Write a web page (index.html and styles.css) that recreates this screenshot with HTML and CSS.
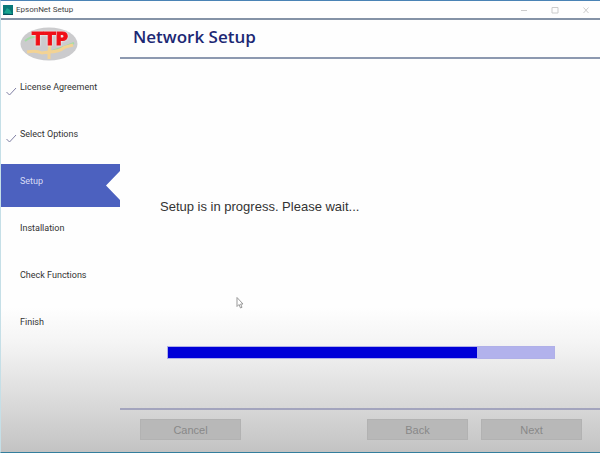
FILE: index.html
```
<!DOCTYPE html>
<html lang="en">
<head>
  <meta charset="UTF-8">
  <title>EpsonNet Setup</title>
  <link rel="stylesheet" href="styles.css">
</head>
<body>
  <div class="window">
    <header class="titlebar">
      <svg class="app-icon" width="10" height="10" viewBox="0 0 10 10">
        <rect width="10" height="10" fill="#087878"/>
        <path d="M1 8 4 3l3 2 2 4z" fill="#17a590"/>
        <path d="M0 9h10v1H0z" fill="#064f5d"/>
      </svg>
      <span class="app-name">EpsonNet Setup</span>
      <div class="window-controls">
        <button aria-label="Minimize"><svg width="8" height="8" viewBox="0 0 8 8"><path d="M1 4.500h6"/></svg></button>
        <button aria-label="Maximize"><svg width="8" height="8" viewBox="0 0 8 8"><path d="M1 1.500h6v5.500h-6z"/></svg></button>
        <button aria-label="Close"><svg width="8" height="8" viewBox="0 0 8 8"><path d="M1.500 1.500l5 5.500M6.500 1.500l-5 5.500"/></svg></button>
      </div>
    </header>

    <div class="content">
      <aside class="sidebar">
        <div class="logo">
          <svg width="58" height="34" viewBox="0 0 58 34" role="img" aria-label="TTP">
            <ellipse cx="29" cy="17" rx="28.500" ry="16.500" fill="#cbcbcd"/>
            <path d="M5 14q6-5 14-4M32 24l12-4 10-4" fill="none" stroke="#a4dba5" stroke-width="2"/>
            <path d="M7 25q9-2 15 1l7-1 1-7M29 25v7M29 25q10 0 16-5l8-2" fill="none" stroke="#f3d394" stroke-width="3"/>
            <text class="logo-text" x="12" y="18">TTP</text>
          </svg>
        </div>
        <ol class="steps">
          <li class="step done"><svg class="check" width="11" height="9" viewBox="0 0 11 9"><path d="M.5 5l3 3L10 1"/></svg>License Agreement</li>
          <li class="step done"><svg class="check" width="11" height="9" viewBox="0 0 11 9"><path d="M.5 5l3 3L10 1"/></svg>Select Options</li>
          <li class="step active" aria-current="step">Setup</li>
          <li class="step">Installation</li>
          <li class="step">Check Functions</li>
          <li class="step">Finish</li>
        </ol>
      </aside>

      <main class="main">
        <h1>Network Setup</h1>
        <div class="panel">
          <p>Setup is in progress. Please wait...</p>
          <progress value="80" max="100" aria-label="Setup progress"></progress>
        </div>
        <footer class="buttons">
          <button disabled>Cancel</button>
          <button class="back" disabled>Back</button>
          <button disabled>Next</button>
        </footer>
      </main>
    </div>

    <svg class="cursor" width="8" height="12" viewBox="0 0 8 12">
      <path d="M1 .5v9l2-2 1.500 3.500 1.500-.7L4.600 7H7z"/>
    </svg>
  </div>
</body>
</html>
```
FILE: styles.css
```
* {
  box-sizing: border-box;
}
body {
  margin: 0;
  font-family: "Liberation Sans", Arial, sans-serif;
  color: #333;
}
.window {
  position: relative;
  display: flex;
  flex-direction: column;
  min-height: 100vh;
  border-top: 1px solid #4a83b5;
  border-bottom: 1px solid #347e9d;
  border-left: 1px solid #c5dfe7;
  background: linear-gradient(#fefefe 68%, #f4f4f4 76%, #dadada 89%, #c3c3c3);
}

/* title bar */
.titlebar {
  display: flex;
  align-items: center;
  height: 19px;
  padding: 0 10px 0 2px;
  border-bottom: 2px solid #8492a6;
}
.app-name {
  margin-left: 3px;
  font-family: Roboto, sans-serif;
  font-size: 8px;
  line-height: 12px;
  color: #444;
}
.window-controls {
  display: flex;
  gap: 23px;
  margin-left: auto;
}
.window-controls button {
  display: flex;
  padding: 0;
  border: none;
  background: none;
}
.window-controls path {
  fill: none;
  stroke: #ccc;
}
.content {
  flex: 1;
  display: flex;
}

/* left menu */
.sidebar {
  width: 119px;
}
.logo {
  display: flex;
  height: 50px;
  padding: 7px 0 0 19px;
}
.logo-text {
  font-family: "DejaVu Sans", sans-serif;
  font-size: 17px;
  font-weight: bold;
  fill: #f01018;
  stroke: #f01018;
  stroke-width: 1px;
  filter: drop-shadow(0 0 1px #fff);
}
.steps {
  display: flex;
  flex-direction: column;
  gap: 4px;
  margin: 0;
  padding: 0;
  list-style: none;
}
.step {
  position: relative;
  height: 43px;
  padding: 11px 0 0 19px;
  font-family: Roboto, sans-serif;
  font-size: 9px;
  line-height: 12px;
}
.step.active {
  background: #4c61bf;
  color: #d8ddf5;
  clip-path: polygon(0 0, 100% 0, 100% 7px, calc(100% - 14px) 50%, 100% 36px, 100% 100%, 0 100%);
}
.check {
  position: absolute;
  left: 5px;
  top: 17px;
  fill: none;
  stroke: #8080a4;
}

/* right side */
.main {
  flex: 1;
  display: flex;
  flex-direction: column;
}
h1 {
  height: 39px;
  margin: 0;
  padding: 4px 13px;
  border-bottom: 2px solid #8d99b0;
  font-family: "Open Sans", sans-serif;
  font-size: 17px;
  font-weight: 600;
  line-height: 26px;
  color: #1c2874;
}
.panel {
  flex: 1;
  display: flex;
  flex-direction: column;
  padding: 140px 45px 0 40px;
}
p {
  margin: 0;
  font-size: 13px;
  line-height: 16px;
}
progress {
  appearance: none;
  width: calc(100% - 7px);
  height: 13px;
  margin: 131px 0 0 7px;
  border: 1px solid #b0b0e8;
}
progress::-webkit-progress-bar {
  background: #b2b2ec;
}
progress::-webkit-progress-value {
  background: #0000d8;
}
.buttons {
  display: flex;
  gap: 13px;
  padding: 9px 18px 12px 20px;
  border-top: 2px solid #a3a4bd;
}
.buttons button {
  width: 101px;
  height: 21px;
  padding: 0;
  border: 1px solid #b2b2b2;
  background: #b8b8b8;
  font-family: inherit;
  font-size: 11px;
  color: #888;
}
.buttons .back {
  margin-left: auto;
}

.cursor {
  position: absolute;
  left: 235px;
  top: 296px;
  fill: #fff;
  stroke: #999;
}
```
